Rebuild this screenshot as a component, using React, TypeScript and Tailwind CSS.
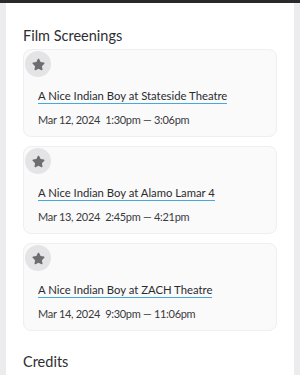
import { FaStar } from 'react-icons/fa';

const screenings = [
  { id: 's1', venue: 'Stateside Theatre', date: 'Mar 12, 2024', start: '1:30pm', end: '3:06pm' },
  { id: 's2', venue: 'Alamo Lamar 4', date: 'Mar 13, 2024', start: '2:45pm', end: '4:21pm' },
  { id: 's3', venue: 'ZACH Theatre', date: 'Mar 14, 2024', start: '9:30pm', end: '11:06pm' },
];

function ScreeningCard({ venue, date, start, end }: { venue: string; date: string; start: string; end: string }) {
  return (
    <div className="flex flex-col rounded-[8px] border border-[#efeff1] bg-[#fafafb] pt-[1px] pl-[1px] pb-[9px]">
      {/* Favourite toggle */}
      <div className="flex h-[26px] w-[26px] items-center justify-center rounded-full bg-[#e4e4e6]">
        <FaStar className="h-[13px] w-[13px] text-[#6d6d70]" />
      </div>

      <div className="mt-[11px] flex flex-col items-start px-[13px] text-[#2b2b2e]">
        <span className="inline-block border-b border-[#45a9dc] text-[11.3px] leading-[15px]">
          A Nice Indian Boy at {venue}
        </span>
        <span className="mt-[8px] text-[11px] leading-[15px] tracking-[-0.3px] text-[#3a3a3d]">
          {date}&nbsp;&nbsp;{start}&nbsp;—&nbsp;{end}
        </span>
      </div>
    </div>
  );
}

export default function App() {
  return (
    <div
      className="flex h-[375px] w-[300px] flex-col overflow-hidden bg-[#ececee]"
      style={{ fontFamily: 'Lato, "Noto Sans", sans-serif' }}
    >
      <div className="h-[3px] bg-[#2a2a2c]" />
      <div className="ml-[6px] flex w-[288px] flex-1 flex-col bg-white px-[17px] pt-[23px]">
        <h2 className="text-[14.5px] leading-[20px] text-[#2e2e31]">Film Screenings</h2>

        <div className="mt-[3px] flex flex-col gap-[9px]">
          {screenings.map(s => (
            <ScreeningCard key={s.id} venue={s.venue} date={s.date} start={s.start} end={s.end} />
          ))}
        </div>

        <h2 className="mt-[21px] text-[14.5px] leading-[20px] text-[#2e2e31]">Credits</h2>
      </div>
    </div>
  );
}
